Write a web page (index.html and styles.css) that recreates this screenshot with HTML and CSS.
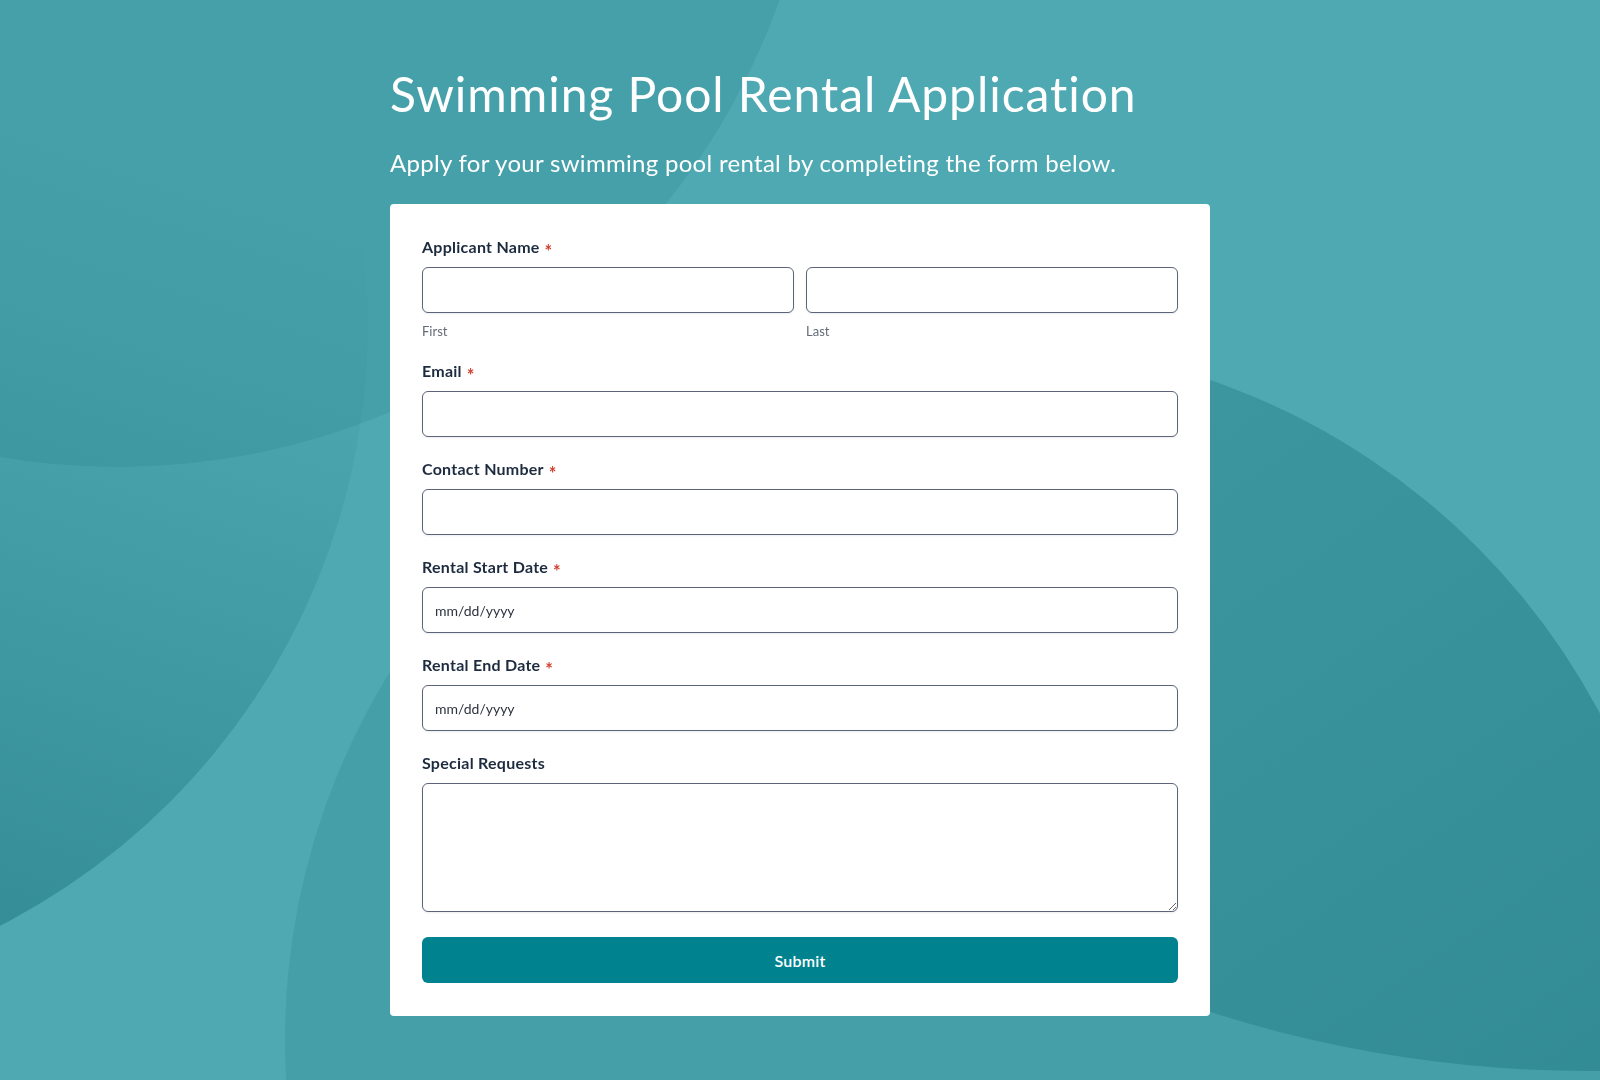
FILE: index.html
```html
<!DOCTYPE html>
<html lang="en">
<head>
<meta charset="utf-8">
<title>Swimming Pool Rental Application</title>
<link rel="stylesheet" href="styles.css">
</head>
<body>
<div class="backdrop" aria-hidden="true">
  <svg class="backdrop-svg" viewBox="0 0 1600 1080" preserveAspectRatio="none" xmlns="http://www.w3.org/2000/svg">
    <defs>
      <clipPath id="clipC"><circle cx="983" cy="1040" r="698"/></clipPath>
      <linearGradient id="gradB" gradientUnits="userSpaceOnUse" x1="250" y1="180" x2="0" y2="950">
        <stop offset="0" stop-color="#0e6670" stop-opacity="0"/>
        <stop offset="0.25" stop-color="#0e6670" stop-opacity="0.07"/>
        <stop offset="1" stop-color="#0e6670" stop-opacity="0.42"/>
      </linearGradient>
      <linearGradient id="gradD" gradientUnits="userSpaceOnUse" x1="1150" y1="420" x2="1600" y2="1080">
        <stop offset="0" stop-color="#0e6670" stop-opacity="0.16"/>
        <stop offset="1" stop-color="#0e6670" stop-opacity="0.34"/>
      </linearGradient>
    </defs>
    <rect x="0" y="0" width="1600" height="1080" fill="#4fa9b2"/>
    <circle cx="118" cy="-235" r="702" fill="#0e6670" fill-opacity="0.13"/>
    <circle cx="-308" cy="324" r="676" fill="url(#gradB)"/>
    <g clip-path="url(#clipC)">
      <rect x="0" y="0" width="1600" height="1080" fill="#0e6670" fill-opacity="0.14"/>
      <circle cx="1588" cy="-166" r="1237" fill="url(#gradD)"/>
    </g>
  </svg>
</div>

<main class="page">
  <header class="intro">
    <h1 class="title">Swimming Pool Rental Application</h1>
    <p class="subtitle">Apply for your swimming pool rental by completing the form below.</p>
  </header>

  <form class="card">
    <div class="field">
      <label class="label">Applicant Name<span class="req">*</span></label>
      <div class="name-row">
        <div class="name-col">
          <input class="input" type="text" aria-label="First">
          <span class="sublabel">First</span>
        </div>
        <div class="name-col">
          <input class="input" type="text" aria-label="Last">
          <span class="sublabel">Last</span>
        </div>
      </div>
    </div>

    <div class="field">
      <label class="label">Email<span class="req">*</span></label>
      <input class="input" type="email">
    </div>

    <div class="field">
      <label class="label">Contact Number<span class="req">*</span></label>
      <input class="input" type="tel">
    </div>

    <div class="field">
      <label class="label">Rental Start Date<span class="req">*</span></label>
      <input class="input date" type="text" placeholder="mm/dd/yyyy">
    </div>

    <div class="field">
      <label class="label">Rental End Date<span class="req">*</span></label>
      <input class="input date" type="text" placeholder="mm/dd/yyyy">
    </div>

    <div class="field field-last">
      <label class="label">Special Requests</label>
      <textarea class="input textarea"></textarea>
    </div>

    <button class="submit" type="button">Submit</button>
  </form>
</main>
</body>
</html>
```

FILE: styles.css
```css
* {
  box-sizing: border-box;
}

html, body {
  margin: 0;
  padding: 0;
}

body {
  min-height: 1080px;
  font-family: "Lato", "Liberation Sans", sans-serif;
  font-variant-ligatures: none;
  color: #1e2a3b;
  background: #4fa9b2;
  overflow: hidden;
}

.backdrop {
  position: fixed;
  inset: 0;
  z-index: 0;
}

.backdrop-svg {
  display: block;
  width: 100%;
  height: 100%;
}

.page {
  position: relative;
  z-index: 1;
  width: 820px;
  margin: 0 auto;
  padding-top: 65px;
}

.intro {
  display: flex;
  flex-direction: column;
  gap: 24px;
  margin-bottom: 25px;
}

.title {
  margin: 0;
  font-size: 48px;
  line-height: 58px;
  font-weight: 400;
  letter-spacing: 0.95px;
  color: #ffffff;
}

.subtitle {
  margin: 0;
  font-size: 24px;
  line-height: 32px;
  font-weight: 400;
  letter-spacing: 0.3px;
  color: #ffffff;
}

.card {
  background: #ffffff;
  border-radius: 4px;
  padding: 31px 32px 33px;
  display: flex;
  flex-direction: column;
}

.field {
  display: flex;
  flex-direction: column;
  margin-bottom: 20px;
}

.field-last {
  margin-bottom: 25px;
}

.label {
  display: flex;
  align-items: center;
  height: 24px;
  font-size: 16px;
  line-height: 24px;
  font-weight: 700;
  letter-spacing: 0.25px;
  color: #1d2b3f;
  margin-bottom: 8px;
}

.req {
  color: #d23f2f;
  font-size: 18px;
  line-height: 18px;
  font-weight: 700;
  letter-spacing: 0;
  margin-left: 5px;
  padding-top: 7px;
}

.name-row {
  display: grid;
  grid-template-columns: 1fr 1fr;
  gap: 12px;
}

.name-col {
  display: flex;
  flex-direction: column;
}

.sublabel {
  margin-top: 10px;
  font-size: 13px;
  line-height: 16px;
  color: #646b77;
}

.input {
  display: block;
  width: 100%;
  height: 46px;
  margin: 0;
  padding: 0 12px;
  border: 1px solid #5c6479;
  border-radius: 6px;
  background: #ffffff;
  box-shadow: 0 1px 2px rgba(16, 24, 40, 0.08);
  font-family: "Lato", "Liberation Sans", sans-serif;
  font-size: 14px;
  color: #1f2937;
  outline: none;
}

.date::placeholder {
  color: #2d3440;
  opacity: 1;
}

.textarea {
  height: 129px;
  padding: 10px 12px;
  resize: vertical;
}

.submit {
  display: block;
  width: 100%;
  height: 46px;
  margin: 0;
  border: none;
  border-radius: 6px;
  background: #00838f;
  color: #ffffff;
  font-family: "Lato", "Liberation Sans", sans-serif;
  font-size: 16px;
  font-weight: 600;
  letter-spacing: 0.2px;
  cursor: pointer;
}
```
